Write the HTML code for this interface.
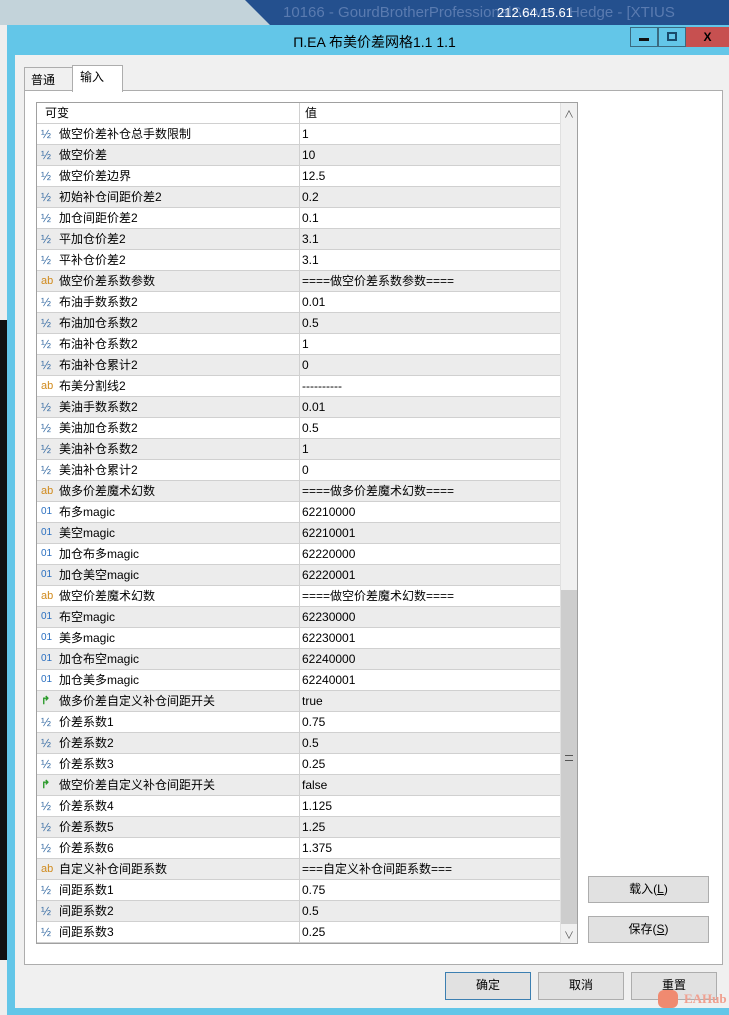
<!DOCTYPE html><html><head><meta charset="utf-8"><style>
*{margin:0;padding:0;box-sizing:border-box}
body{width:729px;height:1015px;position:relative;overflow:hidden;background:#1a1a1a;font-family:"Liberation Sans","Noto Sans CJK SC",sans-serif;font-size:12px;color:#000}
.a{position:absolute}
.row{position:absolute;left:0;width:523px;height:21px;border-bottom:1px solid #d0d0d0}
.row span{position:absolute;top:0;height:20px;line-height:20px;white-space:nowrap}
.ic{left:4px;font-size:11px}
.n{left:22px}
.v{left:265px}
.btn{position:absolute;background:#e1e1e1;border:1px solid #adadad;text-align:center;line-height:25px;font-size:12px}
</style></head><body>
<div class="a" style="left:0;top:0;width:729px;height:25px;background:#c3d3da"></div>
<div class="a" style="left:245px;top:0;width:484px;height:25px;background:#24508e;clip-path:polygon(0 0,100% 0,100% 100%,25px 100%)"></div>
<div class="a" style="left:283px;top:4px;color:#5a7bb0;font-size:15px">10166 - GourdBrotherProfessionalServer - Hedge - [XTIUS</div>
<div class="a" style="left:497px;top:5px;color:#fff;font-size:13px">212.64.15.61</div>
<div class="a" style="left:0;top:25px;width:8px;height:990px;background:#eee"></div>
<div class="a" style="left:0;top:320px;width:8px;height:640px;background:#111"></div>
<div class="a" style="left:7px;top:25px;width:722px;height:990px;background:#63c6e8"></div>
<div class="a" style="left:0;top:28px;width:729px;height:28px;text-align:center;font-size:14px;line-height:28px;padding-left:20px">П.EA 布美价差网格1.1 1.1</div>
<div class="a" style="left:630px;top:27px;width:28px;height:20px;background:#63c6e8;border:1px solid #3a6a80"><div class="a" style="left:8px;top:10px;width:10px;height:3px;background:#111"></div></div>
<div class="a" style="left:658px;top:27px;width:28px;height:20px;background:#63c6e8;border:1px solid #3a6a80"><div class="a" style="left:8px;top:4px;width:10px;height:9px;border:2px solid #1a4a6a"></div></div>
<div class="a" style="left:686px;top:27px;width:43px;height:20px;background:#c75050;color:#000;font-weight:bold;text-align:center;line-height:20px">X</div>
<div class="a" style="left:15px;top:55px;width:714px;height:953px;background:#f0f0f0"></div>
<div class="a" style="left:24px;top:67px;width:49px;height:24px;background:#f0f0f0;border:1px solid #adadad;padding:0 6px;line-height:24px">普通</div>
<div class="a" style="left:24px;top:90px;width:699px;height:875px;background:#fff;border:1px solid #adadad"></div>
<div class="a" style="left:72px;top:65px;width:51px;height:27px;background:#fff;border:1px solid #adadad;border-bottom:none;padding:0 7px;line-height:22px">输入</div>
<div class="a" style="left:36px;top:102px;width:542px;height:842px;border:1px solid #a0a0a0;background:#fff;overflow:hidden">
<div class="a" style="left:0;top:0;width:523px;height:21px;border-bottom:1px solid #d0d0d0"><span class="a" style="left:8px;top:0;line-height:21px">可变</span><div class="a" style="left:262px;top:0;width:1px;height:21px;background:#d0d0d0"></div><span class="a" style="left:268px;top:0;line-height:21px">值</span></div>
<div id="rows" class="a" style="left:0;top:21px;width:523px;height:820px"></div>
<div class="a" style="left:262px;top:21px;width:1px;height:820px;background:#d0d0d0"></div>
<div class="a" style="left:523px;top:0;width:18px;height:840px;background:#f0f0f0;border-left:1px solid #e0e0e0"></div>
<div class="a" style="left:524px;top:3px;width:16px;color:#555;text-align:center;font-size:10px">∧</div>
<div class="a" style="left:524px;top:487px;width:16px;height:334px;background:#cdcdcd"><div class="a" style="left:4px;top:165px;width:8px;height:6px;border-top:1px solid #555;border-bottom:1px solid #555"></div></div>
<div class="a" style="left:524px;top:824px;width:16px;color:#555;text-align:center;font-size:10px">∨</div>
</div>
<div class="btn" style="left:588px;top:876px;width:121px;height:27px">载入(<u>L</u>)</div>
<div class="btn" style="left:588px;top:916px;width:121px;height:27px">保存(<u>S</u>)</div>
<div class="btn" style="left:445px;top:972px;width:86px;height:28px;border-color:#3c7fb1">确定</div>
<div class="btn" style="left:538px;top:972px;width:86px;height:28px">取消</div>
<div class="btn" style="left:631px;top:972px;width:86px;height:28px">重置</div>
<div class="a" style="left:658px;top:990px;width:20px;height:18px;background:#f08a70;border-radius:6px"></div>
<div class="a" style="left:684px;top:991px;color:#f0a090;font-weight:bold;font-family:'Liberation Serif',serif;font-size:13px">EAHub</div>
<script>
var d=[["h","做空价差补仓总手数限制","1"],["h","做空价差","10"],["h","做空价差边界","12.5"],["h","初始补仓间距价差2","0.2"],["h","加仓间距价差2","0.1"],["h","平加仓价差2","3.1"],["h","平补仓价差2","3.1"],["a","做空价差系数参数","====做空价差系数参数===="],["h","布油手数系数2","0.01"],["h","布油加仓系数2","0.5"],["h","布油补仓系数2","1"],["h","布油补仓累计2","0"],["a","布美分割线2","----------"],["h","美油手数系数2","0.01"],["h","美油加仓系数2","0.5"],["h","美油补仓系数2","1"],["h","美油补仓累计2","0"],["a","做多价差魔术幻数","====做多价差魔术幻数===="],["o","布多magic","62210000"],["o","美空magic","62210001"],["o","加仓布多magic","62220000"],["o","加仓美空magic","62220001"],["a","做空价差魔术幻数","====做空价差魔术幻数===="],["o","布空magic","62230000"],["o","美多magic","62230001"],["o","加仓布空magic","62240000"],["o","加仓美多magic","62240001"],["b","做多价差自定义补仓间距开关","true"],["h","价差系数1","0.75"],["h","价差系数2","0.5"],["h","价差系数3","0.25"],["b","做空价差自定义补仓间距开关","false"],["h","价差系数4","1.125"],["h","价差系数5","1.25"],["h","价差系数6","1.375"],["a","自定义补仓间距系数","===自定义补仓间距系数==="],["h","间距系数1","0.75"],["h","间距系数2","0.5"],["h","间距系数3","0.25"]];
var ic={h:'<span class="ic" style="color:#3a6ea5;font-size:12px">½</span>',a:'<span class="ic" style="color:#d08a1c">ab</span>',o:'<span class="ic" style="color:#2a6fc0;font-size:10px">01</span>',b:'<span class="ic" style="color:#2a9a2a;font-weight:bold">↱</span>'};
var h="";d.forEach(function(r,i){h+='<div class="row" style="top:'+(i*21)+'px;background:'+(i%2?'#ececec':'#fff')+'">'+ic[r[0]]+'<span class="n">'+r[1]+'</span><span class="v">'+r[2]+'</span></div>'});
document.getElementById("rows").innerHTML=h;
</script>
</body></html>
